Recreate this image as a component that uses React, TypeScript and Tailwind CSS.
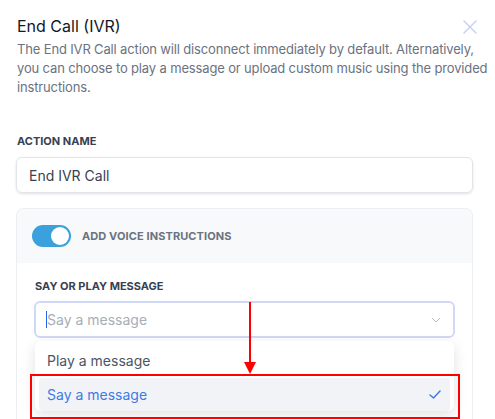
import React from "react";

export default function App() {
  return (
    <div className="relative w-[495px] h-[419px] overflow-hidden bg-white font-['Inter',sans-serif]">
      <div className="pl-[17px] pr-[5px] pt-[15px]">
        <div className="flex items-start justify-between pr-[11px]">
          <h1 className="text-[16px] leading-[22px] text-[#111827] font-normal">End Call (IVR)</h1>
          <svg width="14" height="14" viewBox="0 0 14 14" className="mt-[5px] mr-[2px]" fill="none" stroke="#c3cdf5" strokeWidth="1.4" strokeLinecap="round">
            <path d="M1 1L13 13M13 1L1 13" />
          </svg>
        </div>
        <p className="mt-[3px] text-[13px] leading-[19px] tracking-[-0.15px] text-[#6b7280]">
          The End IVR Call action will disconnect immediately by default. Alternatively, you can choose to play a message or upload custom music using the provided instructions.
        </p>
      </div>

      <div className="pl-[16px] pr-[22px] mt-[37px]">
        <div className="text-[11px] leading-[14px] font-bold text-[#374151] pl-[1px]">ACTION NAME</div>
        <div className="mt-[9px] h-[36px] rounded-md border border-[#e2e4e9] shadow-sm flex items-center px-[12px] text-[14px] text-[#374151]">
          End IVR Call
        </div>

        <div className="mt-[15px] rounded-t-lg border border-[#eceef1] border-b-0 h-[300px]">
          <div className="h-[54px] bg-[#f8f9fb] rounded-t-lg flex items-center pl-[15px] gap-[11px]">
            <div className="w-[39px] h-[22px] rounded-full bg-[#3ba1dd] flex items-center justify-end pr-[2px]">
              <div className="w-[18px] h-[18px] rounded-full bg-white" />
            </div>
            <span className="text-[11px] font-bold text-[#6b7280] tracking-[0.1px]">ADD VOICE INSTRUCTIONS</span>
          </div>
          <div className="pl-[17px] pr-[17px] pt-[16px]">
            <div className="text-[11px] leading-[14px] font-bold text-[#374151] pl-[1px]">SAY OR PLAY MESSAGE</div>
            <div className="mt-[8px] h-[37px] rounded-md border-2 border-[#cfd9f7] flex items-center pl-[10px] pr-[12px]">
              <div className="w-[1px] h-[17px] bg-[#2563eb]" />
              <span className="text-[14px] text-[#a8adb6]">Say a message</span>
              <svg width="10" height="6" viewBox="0 0 10 6" className="ml-auto" fill="none" stroke="#b8bcc4" strokeWidth="1">
                <path d="M1 1L5 5L9 1" />
              </svg>
            </div>
            <div className="mt-[3px] mx-[1px] bg-white shadow-[0_4px_14px_rgba(0,0,0,0.12)] rounded-md pt-[4px] px-[4px]">
              <div className="h-[30px] flex items-center pl-[8px] text-[14px] text-[#4b5563]">Play a message</div>
              <div className="mt-[3px] h-[33px] rounded bg-[#f2f3f6] flex items-center pl-[8px] pr-[9px] text-[14px] text-[#3d7be6]">
                Say a message
                <svg width="12" height="9" viewBox="0 0 12 9" className="ml-auto" fill="none" stroke="#3d7be6" strokeWidth="1.5" strokeLinecap="round" strokeLinejoin="round">
                  <path d="M1 5L4.5 8L11 1" />
                </svg>
              </div>
            </div>
          </div>
        </div>
      </div>

      {/* annotation */}
      <div className="absolute left-[249px] top-[302px] w-[2px] h-[62px] bg-[#ff0000]" />
      <svg className="absolute left-[244px] top-[362px]" width="12" height="12" viewBox="0 0 12 12">
        <path d="M0 0L12 0L6 12Z" fill="#ff0000" />
      </svg>
      <div className="absolute left-[30px] top-[374px] w-[430px] h-[45px] border-2 border-[#ff0000]" />
    </div>
  );
}
